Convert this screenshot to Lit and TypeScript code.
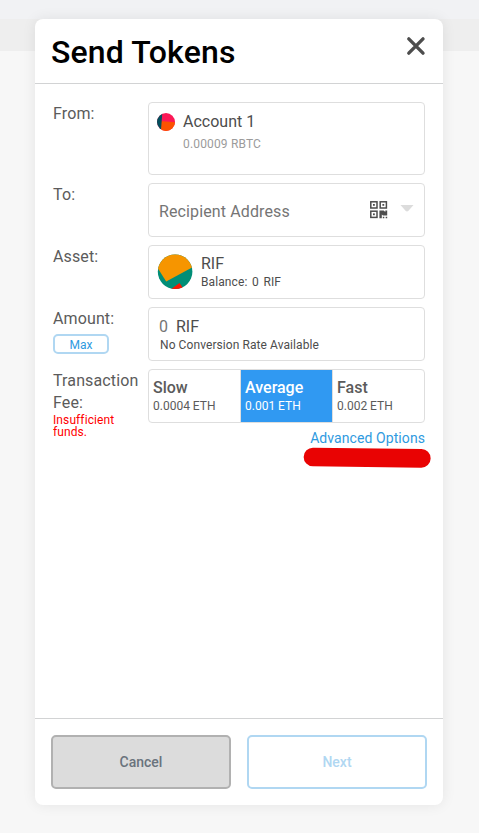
import { LitElement, html, css, svg } from "lit";
import { customElement, property } from "lit/decorators.js";
import { classMap } from "lit/directives/class-map.js";

@customElement("form-row")
class FormRow extends LitElement {
  @property() label = "";
  static styles = css`
    :host { display: flex; align-items: flex-start; }
    .label { width: 95px; flex: none; padding-top: 1px; font-size: 16px; line-height: 22px; letter-spacing: 0.12px; color: #5b5b5b; }
    .field { flex: 1; min-width: 0; }
  `;
  render() {
    return html`
      <div class="label">${this.label}<slot name="below"></slot></div>
      <div class="field"><slot></slot></div>
    `;
  }
}

const fees = [
  { name: "Slow", price: "0.0004 ETH", selected: false },
  { name: "Average", price: "0.001 ETH", selected: true },
  { name: "Fast", price: "0.002 ETH", selected: false },
];

const finder = (x: number, y: number) => svg`
  <rect x=${x + 0.8} y=${y + 0.8} width="6.2" height="6.2" fill="none" stroke="#4d4d4d" stroke-width="1.5"></rect>
  <rect x=${x + 3} y=${y + 3} width="1.8" height="1.8" fill="#4d4d4d"></rect>`;

@customElement("app-root")
class AppRoot extends LitElement {
  static styles = css`
    :host {
      display: block; height: 833px; box-sizing: border-box; padding: 19px 36px 28px 35px;
      font-family: Roboto, "Liberation Sans", sans-serif;
      background: linear-gradient(#f1f2f4 0 19px, #eeeeee 19px 51px, #f7f7f7 51px);
    }
    * { box-sizing: border-box; }
    .card {
      height: 786px; display: flex; flex-direction: column; background: #fff;
      border-radius: 8px; box-shadow: 0 0 14px rgba(0, 0, 0, 0.08);
    }
    header {
      height: 65px; flex: none; display: flex; justify-content: space-between;
      padding: 14px 17px 0 16px; border-bottom: 1px solid #d2d3d4;
    }
    h1 { margin: 0; font-size: 32px; line-height: 38px; font-weight: 500; letter-spacing: 0.15px; color: #000; }
    .close { margin-top: 3px; width: 20px; height: 20px; }
    main { flex: 1; padding: 18px 18px 0; display: flex; flex-direction: column; gap: 8px; }
    .box {
      height: 54px; border: 1px solid #dedede; border-radius: 4px; background: #fff;
      display: flex; color: #4d4d4d; font-size: 16px; line-height: 18px;
    }
    .from { height: 73px; padding: 10px 8px; gap: 8px; }
    .from svg { flex: none; }
    .sub { font-size: 12px; line-height: 16px; letter-spacing: 0.08px; }
    .from .sub { color: #9b9b9b; margin-top: 5px; letter-spacing: 0.16px; }
    .to { align-items: center; padding: 0 10px 0 10px; color: #757575; }
    .to .hint { flex: 1; padding-top: 3px; letter-spacing: 0.12px; }
    .caret { margin: 0 0 4px 12px; }
    .asset { padding: 8px 8px; gap: 8px; }
    .asset .name { padding-top: 1px; }
    .asset .sub { margin-top: 1px; word-spacing: 1.5px; letter-spacing: 0.1px; }
    .amount { flex-direction: column; padding: 10px 10px 0; }
    .amount .value { color: #4d4d4d; word-spacing: 4px; }
    .amount .zero { color: #757575; }
    .amount .sub { padding: 1px 0 0 1px; }
    .max {
      display: flex; align-items: center; justify-content: center; width: 56px; height: 20px;
      margin-top: 4px; border: 2px solid #b0d7f2; border-radius: 5px; background: #fff;
      color: #2f9ae0; font: 12px Roboto, sans-serif; padding: 2px 0 0;
    }
    .error { font-size: 12px; line-height: 12px; color: #f00; width: 70px; letter-spacing: 0.1px; }
    .fees { overflow: hidden; }
    .fee { flex: 1; padding: 9px 4px 0; color: #5b5b5b; }
    .fee + .fee { border-left: 1px solid #dedede; }
    .fee.on { background: #3099f2; color: #fff; }
    .fee b { display: block; font-weight: 500; }
    .fee .sub { line-height: 18px; letter-spacing: 0; }
    .advanced { display: flex; flex-direction: column; align-items: flex-end; }
    .link { font-size: 14px; line-height: 16px; margin-top: 7px; color: #2f9ae0; letter-spacing: 0.08px; }
    .mark { margin: 0 -7px 0 0; }
    footer {
      height: 87px; flex: none; border-top: 1px solid #d2d3d4; padding: 16px 16px 0;
      display: flex; gap: 16px;
    }
    .btn {
      flex: 1; height: 54px; border-radius: 5px; padding: 0;
      font: 500 14px Roboto, sans-serif;
    }
    .cancel { background: #dcdcdc; border: 2px solid #b1b1b1; color: #6a737d; }
    .next { background: #fff; border: 2px solid #b0d7f2; color: #b0d7f2; }
    svg { display: block; }
  `;
  render() {
    return html`
      <div class="card">
        <header>
          <h1>Send Tokens</h1>
          <svg class="close" viewBox="0 0 20 20">
            <path d="M2.800 2.900L17 17.100M17 2.900L2.800 17.100" stroke="#4d4d4d" stroke-width="3.400" stroke-linecap="round"></path>
          </svg>
        </header>
        <main>
          <form-row label="From:">
            <div class="box from">
              <svg width="18" height="18" viewBox="0 0 18 18">
                <clipPath id="a"><circle cx="9" cy="9" r="9"></circle></clipPath>
                <g clip-path="url(#a)">
                  <path fill="#fb1856" d="M0 0h18v18H0z"></path>
                  <path fill="#fc5200" d="M3 8l15 1.200V18H3z"></path>
                  <path fill="#034f5d" d="M0 0h5.300L3.900 18H0z"></path>
                </g>
              </svg>
              <div>
                <div>Account 1</div>
                <div class="sub">0.00009 RBTC</div>
              </div>
            </div>
          </form-row>
          <form-row label="To:">
            <div class="box to">
              <span class="hint">Recipient Address</span>
              <svg width="18" height="18" viewBox="0 0 18 18">
                ${finder(0, 0)}${finder(9.4, 0)}${finder(0, 9.4)}
                <path fill="#4d4d4d" d="M9.400 9.400h4.300l1.600 1.600V9.400h1.900v5.200h-4.200l-1.200-1.200v3.800H9.400zM12.800 15.700h1.500v1.500h-1.500zM15.700 15.700h1.500v1.500h-1.500z"></path>
              </svg>
              <svg class="caret" width="14" height="7" viewBox="0 0 14 7">
                <path fill="#dcdcdc" d="M.500 0h13L8.500 5.800q-1.500 1.500-3 0z"></path>
              </svg>
            </div>
          </form-row>
          <form-row label="Asset:">
            <div class="box asset">
              <svg width="36" height="36" viewBox="0 0 36 36">
                <clipPath id="b"><circle cx="18.100" cy="17.700" r="17.300"></circle></clipPath>
                <g clip-path="url(#b)">
                  <path fill="#018e77" d="M0 0h36v36H0z"></path>
                  <path fill="#f69500" d="M0 13L0 0h36v13L9.200 27.600z"></path>
                  <path fill="#f91803" d="M13.500 35.500l9-6.600 4.500 6.600z"></path>
                </g>
              </svg>
              <div class="name">
                <div>RIF</div>
                <div class="sub">Balance: 0 RIF</div>
              </div>
            </div>
          </form-row>
          <form-row label="Amount:">
            <button class="max" slot="below">Max</button>
            <div class="box amount">
              <div class="value"><span class="zero">0</span> RIF</div>
              <div class="sub">No Conversion Rate Available</div>
            </div>
          </form-row>
          <form-row label="Transaction Fee:">
            <div class="error" slot="below">Insufficient funds.</div>
            <div class="box fees">
              ${fees.map((f) => html`
                <div class=${classMap({ fee: true, on: f.selected })}>
                  <b>${f.name}</b>
                  <div class="sub">${f.price}</div>
                </div>`)}
            </div>
            <div class="advanced">
              <span class="link">Advanced Options</span>
              <svg class="mark" width="129" height="22" viewBox="0 0 129 22">
                <path d="M10 11L118.300 12.300" stroke="#e90303" stroke-width="18.700" stroke-linecap="round"></path>
              </svg>
            </div>
          </form-row>
        </main>
        <footer>
          <button class="btn cancel">Cancel</button>
          <button class="btn next">Next</button>
        </footer>
      </div>
    `;
  }
}
